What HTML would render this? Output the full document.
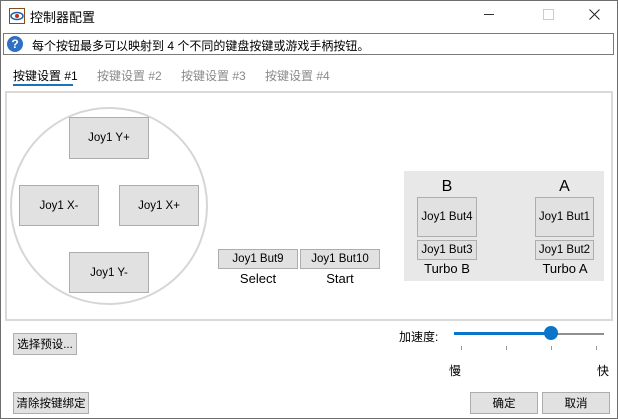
<!DOCTYPE html><html><head><style>
body{margin:0;width:618px;height:419px;background:#fff;font-family:"Liberation Sans","Noto Sans CJK SC",sans-serif;font-size:12px;color:#000;position:relative;overflow:hidden}
.a{position:absolute}
.b{position:absolute;background:#e1e1e1;border:1px solid #adadad;box-sizing:border-box;display:flex;align-items:center;justify-content:center;font-size:11.5px}
.t{position:absolute;font-size:14px;text-align:center}
</style></head><body>
<div class="a" style="left:0;top:0;width:618px;height:419px;border:1px solid #6e6e6e;box-sizing:border-box"></div>
<svg class="a" style="left:9px;top:8px" width="16" height="16"><rect x="0.5" y="0.5" width="15" height="15" fill="#fff" stroke="#8b4a1a"/><ellipse cx="8" cy="8" rx="6" ry="3.5" fill="none" stroke="#1b5fb0" stroke-width="1.5"/><circle cx="8" cy="8" r="2" fill="#c03020"/></svg>
<div class="a" style="left:30px;top:7px;font-size:13px">控制器配置</div>
<div class="a" style="left:484px;top:14px;width:10px;height:1px;background:#333"></div>
<div class="a" style="left:543px;top:9px;width:9px;height:9px;border:1px solid #ccc"></div>
<svg class="a" style="left:589px;top:9px" width="11" height="11"><path d="M0.5 0.5L10.5 10.5M10.5 0.5L0.5 10.5" stroke="#222" stroke-width="1"/></svg>
<div class="a" style="left:3px;top:33px;width:611px;height:22px;border:1px solid #7a7a7a;box-sizing:border-box"></div>
<div class="a" style="left:7px;top:36px;width:16px;height:16px;border-radius:50%;background:#2f6fc4;color:#fff;font-weight:bold;font-size:12px;text-align:center;line-height:16px">?</div>
<div class="a" style="left:32px;top:37px">每个按钮最多可以映射到 4 个不同的键盘按键或游戏手柄按钮。</div>
<div class="a" style="left:13px;top:67px">按键设置 #1</div>
<div class="a" style="left:13px;top:84px;width:60px;height:2px;background:#1c74b8"></div>
<div class="a" style="left:97px;top:67px;color:#8a8a8a">按键设置 #2</div>
<div class="a" style="left:181px;top:67px;color:#8a8a8a">按键设置 #3</div>
<div class="a" style="left:265px;top:67px;color:#8a8a8a">按键设置 #4</div>
<div class="a" style="left:5px;top:91px;width:608px;height:230px;border:2px solid #d9d9d9;box-sizing:border-box"></div>
<div class="a" style="left:10px;top:107px;width:198px;height:198px;border:2px solid #d6d6d6;border-radius:50%;box-sizing:border-box"></div>
<div class="b" style="left:69px;top:117px;width:80px;height:42px">Joy1 Y+</div>
<div class="b" style="left:19px;top:185px;width:80px;height:41px">Joy1 X-</div>
<div class="b" style="left:119px;top:185px;width:80px;height:41px">Joy1 X+</div>
<div class="b" style="left:69px;top:252px;width:80px;height:41px">Joy1 Y-</div>
<div class="b" style="left:218px;top:249px;width:80px;height:20px">Joy1 But9</div>
<div class="b" style="left:300px;top:249px;width:80px;height:20px">Joy1 But10</div>
<div class="t" style="left:218px;top:271px;width:80px;font-size:13px">Select</div>
<div class="t" style="left:300px;top:271px;width:80px;font-size:13px">Start</div>
<div class="a" style="left:404px;top:171px;width:200px;height:110px;background:#e8e8e8"></div>
<div class="t" style="left:417px;top:178px;width:60px;font-size:16px">B</div>
<div class="t" style="left:535px;top:178px;width:59px;font-size:16px">A</div>
<div class="b" style="left:417px;top:197px;width:60px;height:40px">Joy1 But4</div>
<div class="b" style="left:535px;top:197px;width:59px;height:40px">Joy1 But1</div>
<div class="b" style="left:417px;top:240px;width:60px;height:20px">Joy1 But3</div>
<div class="b" style="left:535px;top:240px;width:59px;height:20px">Joy1 But2</div>
<div class="t" style="left:407px;top:261px;width:80px;font-size:13px">Turbo B</div>
<div class="t" style="left:525px;top:261px;width:80px;font-size:13px">Turbo A</div>
<div class="b" style="left:13px;top:333px;width:64px;height:22px">选择预设...</div>
<div class="a" style="left:399px;top:328px">加速度:</div>
<div class="a" style="left:454px;top:332px;width:97px;height:3px;background:#0a74c8"></div>
<div class="a" style="left:551px;top:333px;width:53px;height:2px;background:#8f8f8f"></div>
<div class="a" style="left:544px;top:326px;width:14px;height:14px;border-radius:50%;background:#0a74c8"></div>
<div class="a" style="left:461px;top:346px;width:1px;height:4px;background:#999"></div>
<div class="a" style="left:506px;top:346px;width:1px;height:4px;background:#999"></div>
<div class="a" style="left:551px;top:346px;width:1px;height:4px;background:#999"></div>
<div class="a" style="left:596px;top:346px;width:1px;height:4px;background:#999"></div>
<div class="a" style="left:449px;top:362px">慢</div>
<div class="a" style="left:597px;top:362px">快</div>
<div class="b" style="left:13px;top:392px;width:76px;height:22px">清除按键绑定</div>
<div class="b" style="left:470px;top:392px;width:68px;height:22px">确定</div>
<div class="b" style="left:542px;top:392px;width:68px;height:22px">取消</div>
</body></html>
